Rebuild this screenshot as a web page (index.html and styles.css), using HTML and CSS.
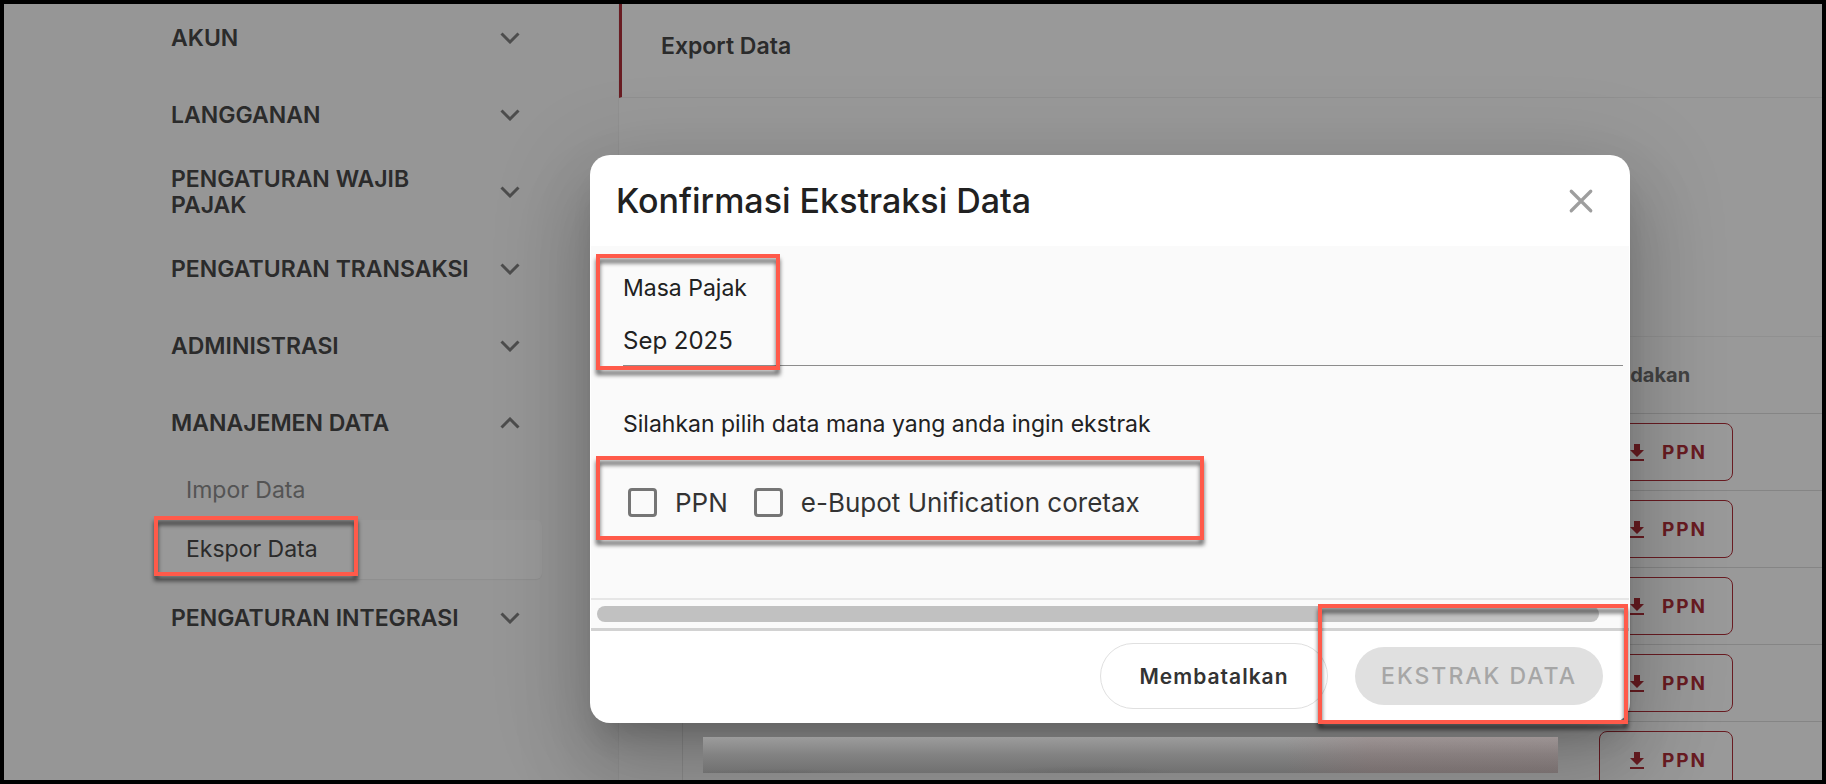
FILE: index.html
```html
<!DOCTYPE html>
<html lang="id">
<head>
    <meta charset="UTF-8">
    <meta name="viewport" content="width=device-width, initial-scale=1.0">
    <title>Export Data</title>
    <link rel="stylesheet" href="styles.css">
</head>
<body>
    <svg width="0" height="0" class="sprite">
        <symbol id="chevron" viewBox="0 0 20 12">
            <path d="M1.5 1.5 L10 10 L18.5 1.5" fill="none" stroke="currentColor" stroke-width="3"/>
        </symbol>
        <symbol id="download" viewBox="0 0 14 17">
            <path d="M4 0h6v6h4l-7 7-7-7h4zM0 15h14v2H0z" fill="currentColor"/>
        </symbol>
    </svg>

    <div class="page">
        <nav class="sidebar">
            <ul class="menu">
                <li><button class="menu-item">AKUN <svg class="chevron"><use href="#chevron"/></svg></button></li>
                <li><button class="menu-item">LANGGANAN <svg class="chevron"><use href="#chevron"/></svg></button></li>
                <li><button class="menu-item">PENGATURAN WAJIB<br>PAJAK <svg class="chevron"><use href="#chevron"/></svg></button></li>
                <li><button class="menu-item">PENGATURAN TRANSAKSI <svg class="chevron"><use href="#chevron"/></svg></button></li>
                <li><button class="menu-item">ADMINISTRASI <svg class="chevron"><use href="#chevron"/></svg></button></li>
                <li class="open">
                    <button class="menu-item">MANAJEMEN DATA <svg class="chevron"><use href="#chevron"/></svg></button>
                    <ul class="submenu">
                        <li><a href="#">Impor Data</a></li>
                        <li class="active"><a href="#">Ekspor Data</a><span class="mark mark-menu"></span></li>
                    </ul>
                </li>
                <li><button class="menu-item">PENGATURAN INTEGRASI <svg class="chevron"><use href="#chevron"/></svg></button></li>
            </ul>
        </nav>

        <main class="content">
            <h1>Export Data</h1>
            <table>
                <thead>
                    <tr><th></th><th class="action">Tindakan</th></tr>
                </thead>
                <tbody>
                    <tr><td></td><td class="action"><button class="download"><svg><use href="#download"/></svg>PPN</button></td></tr>
                    <tr><td></td><td class="action"><button class="download"><svg><use href="#download"/></svg>PPN</button></td></tr>
                    <tr><td></td><td class="action"><button class="download"><svg><use href="#download"/></svg>PPN</button></td></tr>
                    <tr><td></td><td class="action"><button class="download"><svg><use href="#download"/></svg>PPN</button></td></tr>
                    <tr><td><div class="redacted"></div></td><td class="action"><button class="download"><svg><use href="#download"/></svg>PPN</button></td></tr>
                </tbody>
            </table>
        </main>

        <div class="backdrop">
            <div class="modal" role="dialog" aria-labelledby="modal-title">
                <div class="modal-header">
                    <h2 id="modal-title">Konfirmasi Ekstraksi Data</h2>
                    <button class="close" aria-label="Tutup">
                        <svg viewBox="0 0 24 24"><path d="M3 3L21 21M21 3L3 21" fill="none" stroke="currentColor" stroke-width="3" stroke-linecap="round"/></svg>
                    </button>
                </div>
                <div class="modal-body">
                    <div class="field">
                        <label for="masa">Masa Pajak</label>
                        <input type="text" id="masa" value="Sep 2025">
                        <span class="mark mark-field"></span>
                    </div>
                    <p>Silahkan pilih data mana yang anda ingin ekstrak</p>
                    <div class="options">
                        <label><input type="checkbox"> PPN</label>
                        <label><input type="checkbox"> e-Bupot Unification coretax</label>
                        <span class="mark mark-options"></span>
                    </div>
                </div>
                <div class="scrollbar"><div class="thumb"></div></div>
                <div class="modal-footer">
                    <button class="cancel">Membatalkan</button>
                    <div class="submit-wrap">
                        <button class="submit" disabled>EKSTRAK DATA</button>
                        <span class="mark mark-submit"></span>
                    </div>
                </div>
            </div>
        </div>
    </div>
</body>
</html>
```
FILE: styles.css
```css
* {
    box-sizing: border-box;
}
body {
    margin: 0;
    padding: 4px;
    background-color: #000;
    font-family: Inter, "Open Sans", sans-serif;
    font-size: 23px;
    color: #212121;
}
button, input {
    font-family: inherit;
}
button {
    cursor: pointer;
}
ul {
    list-style: none;
    margin: 0;
    padding: 0;
}
.sprite {
    position: absolute;
}
.page {
    position: relative;
    display: flex;
    height: calc(100vh - 8px);
    overflow: hidden;
    background-color: #fff;
}

/* sidebar */
.sidebar {
    width: 615px;
    flex-shrink: 0;
    padding: 10px 76px 0 150px;
    background-color: #fafafa;
    border-right: 1px solid #f2f2f2;
}
.menu > li {
    margin-bottom: 29px;
}
.menu > li.open {
    margin-bottom: 15px;
}
.menu-item {
    display: flex;
    align-items: center;
    justify-content: space-between;
    width: 100%;
    height: 48px;
    padding: 0 22px 0 17px;
    border: none;
    background: none;
    font-size: 23px;
    font-weight: 600;
    line-height: 26px;
    text-align: left;
    white-space: nowrap;
    color: #484848;
}
.chevron {
    width: 20px;
    height: 12px;
    flex-shrink: 0;
    color: #808080;
}
.open .chevron {
    transform: rotate(180deg);
}
.submenu {
    margin-top: 14px;
}
.submenu li {
    position: relative;
    height: 59px;
    padding-left: 32px;
    line-height: 59px;
    border-radius: 6px;
}
.submenu a {
    color: #8c8c8c;
    text-decoration: none;
}
.submenu .active {
    background-color: #fff;
    box-shadow: 0 1px 1px rgba(0, 0, 0, 0.05);
}
.submenu .active a {
    color: #484848;
}

/* content */
.content {
    flex: 1;
}
h1 {
    height: 94px;
    margin: 0 0 238px;
    padding-left: 39px;
    border-left: 3px solid #b0303a;
    border-bottom: 1px solid #f0f0f0;
    font-size: 23px;
    font-weight: 600;
    line-height: 84px;
    color: #484848;
}
table {
    width: calc(100% - 63px);
    margin-left: 63px;
    border-collapse: collapse;
    border-left: 1px solid #e8e8e8;
}
th, td {
    height: 77px;
    padding: 0;
    border-top: 1px solid #dedede;
    text-align: left;
}
th {
    border-top-color: #f0f0f0;
    font-size: 20px;
    font-weight: 700;
    color: #707070;
}
.action {
    width: 223px;
}
.download {
    display: flex;
    align-items: center;
    gap: 18px;
    height: 58px;
    width: 134px;
    padding: 0 0 0 30px;
    border: 1px solid #b0303a;
    border-radius: 8px;
    background: none;
    font-size: 19px;
    font-weight: 700;
    letter-spacing: 2px;
    color: #b0303a;
}
.download svg {
    width: 14px;
    height: 17px;
}
.redacted {
    position: relative;
    z-index: 2;
    height: 36px;
    margin: 0 41px 10px 20px;
    background:
        radial-gradient(ellipse at 9% 100%, rgba(90, 90, 90, 0.3), transparent 8%),
        radial-gradient(ellipse at 45% 100%, rgba(90, 90, 90, 0.3), transparent 14%),
        linear-gradient(to right, transparent 68%, rgba(160, 100, 100, 0.15) 78%),
        linear-gradient(to bottom, #9c9c9c, #828282 50%, #707070);
}

/* modal */
.backdrop {
    position: absolute;
    inset: 0;
    padding: 151px 192px 0 586px;
    background-color: rgba(0, 0, 0, 0.4);
}
.modal {
    position: relative;
    border-radius: 20px;
    background-color: #fff;
    box-shadow: 0 22px 30px -14px rgba(0, 0, 0, 0.2), 0 48px 76px 6px rgba(0, 0, 0, 0.14), 0 18px 92px 16px rgba(0, 0, 0, 0.12);
}
.modal-header {
    display: flex;
    align-items: center;
    justify-content: space-between;
    height: 91px;
    padding: 0 36px 0 26px;
}
h2 {
    margin: 0;
    font-size: 34px;
    font-weight: 500;
}
.close {
    width: 26px;
    height: 26px;
    padding: 0;
    border: none;
    background: none;
    color: #9e9e9e;
}
.close svg {
    display: block;
}
.modal-body {
    margin: 0 1px;
    padding: 28px 6px 80px 32px;
    background-color: #fafafa;
}
.field {
    position: relative;
}
.field label {
    display: block;
    line-height: 28px;
}
.field input {
    display: block;
    width: 100%;
    height: 48px;
    margin-top: 16px;
    padding: 0 0 2px;
    border: none;
    border-bottom: 1px solid #8c8c8c;
    background: none;
    font-size: 24px;
    color: #212121;
}
.modal-body p {
    margin: 44px 0 48px;
    line-height: 28px;
}
.options {
    position: relative;
    display: flex;
    gap: 26px;
    padding-left: 5px;
}
.options label {
    display: flex;
    align-items: center;
    gap: 18px;
    height: 32px;
    font-size: 26px;
    color: #333;
}
.options input {
    appearance: none;
    width: 29px;
    height: 29px;
    margin: 0;
    border: 3px solid #757575;
    border-radius: 4px;
}
.scrollbar {
    height: 33px;
    margin: 0 1px;
    padding: 6px 30px 6px 6px;
    border-top: 2px solid #e6e6e6;
    border-bottom: 3px solid #d2d2d2;
    background-color: #fafafa;
}
.thumb {
    height: 16px;
    border-radius: 8px;
    background-color: #c1c1c1;
}
.modal-footer {
    display: flex;
    align-items: center;
    justify-content: flex-end;
    gap: 27px;
    height: 92px;
    padding: 0 27px 2px 0;
}
.cancel {
    height: 66px;
    width: 228px;
    border: 1px solid #e0e0e0;
    border-radius: 33px;
    background-color: #fff;
    font-size: 21px;
    font-weight: 600;
    letter-spacing: 1px;
    color: #333;
}
.submit-wrap {
    position: relative;
}
.submit {
    display: block;
    height: 58px;
    width: 248px;
    padding: 0;
    border: none;
    border-radius: 29px;
    background-color: #e0e0e0;
    font-size: 23px;
    font-weight: 500;
    letter-spacing: 2px;
    white-space: nowrap;
    color: #a6a6a6;
}

/* highlight frames */
.mark {
    position: absolute;
    border: 4px solid #ff5a4a;
    filter: drop-shadow(0 5px 2px rgba(0, 0, 0, 0.6));
    pointer-events: none;
}
.mark-menu {
    top: -4px;
    left: 0;
    width: 204px;
    height: 60px;
    z-index: 3;
}
.mark-field {
    inset: -20px auto -4px -27px;
    width: 184px;
}
.mark-options {
    inset: -30px auto -22px -27px;
    width: 608px;
}
.mark-submit {
    inset: -43px -25px -19px -37px;
}
```
